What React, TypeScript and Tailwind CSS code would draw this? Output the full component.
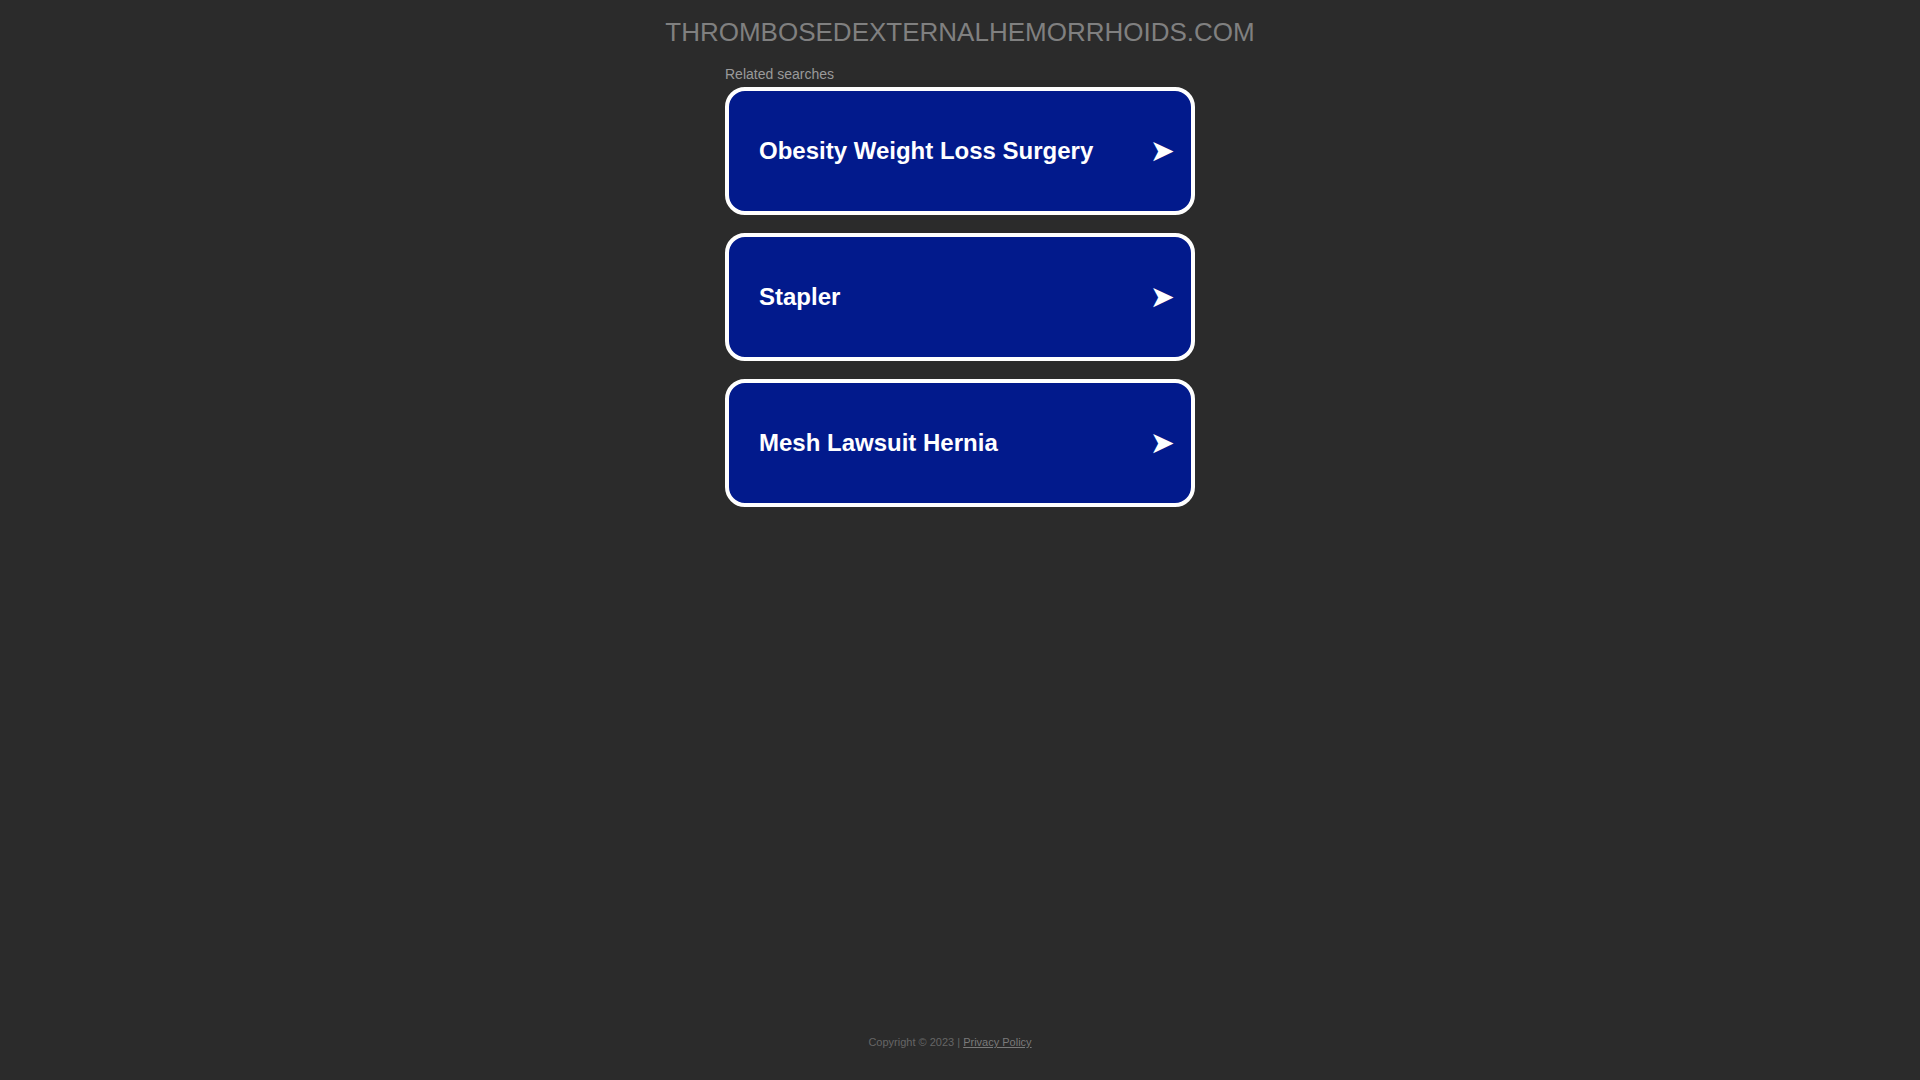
const searches = ["Obesity Weight Loss Surgery", "Stapler", "Mesh Lawsuit Hernia"];

function SearchCard({ label }: { label: string }) {
  return (
    <a
      href="#"
      className="flex h-[128px] items-center justify-between rounded-[20px] border-4 border-white bg-[#021a8c] pb-[2px] pl-[30px] pr-[16px] text-white"
    >
      <span className="text-[24px] font-bold leading-[29px]">{label}</span>
      <span className="font-['DejaVu_Sans',sans-serif] text-[30px] leading-[29px]">➤</span>
    </a>
  );
}

export default function App() {
  return (
    <div className="flex min-h-screen flex-col bg-[#2b2b2b] font-['Liberation_Sans',Arial,sans-serif]">
      <main className="flex flex-1 flex-col items-center">
        <h1 className="pt-[17px] text-[26px] leading-[30px] text-[#808080]">
          THROMBOSEDEXTERNALHEMORRHOIDS.COM
        </h1>
        <div className="mt-[19px] w-[470px]">
          <p className="mb-[5px] text-[14px] leading-[16px] text-[#9a9a9a]">Related searches</p>
          <div className="flex flex-col gap-[18px]">
            {searches.map((s) => (
              <SearchCard key={s} label={s} />
            ))}
          </div>
        </div>
      </main>
      <footer className="pb-[31px] pr-[20px] text-center text-[11px] leading-[14px] text-[#666666]">
        Copyright © 2023 |{" "}
        <a href="#" className="text-[#7a7a7a] underline">
          Privacy Policy
        </a>
      </footer>
    </div>
  );
}
